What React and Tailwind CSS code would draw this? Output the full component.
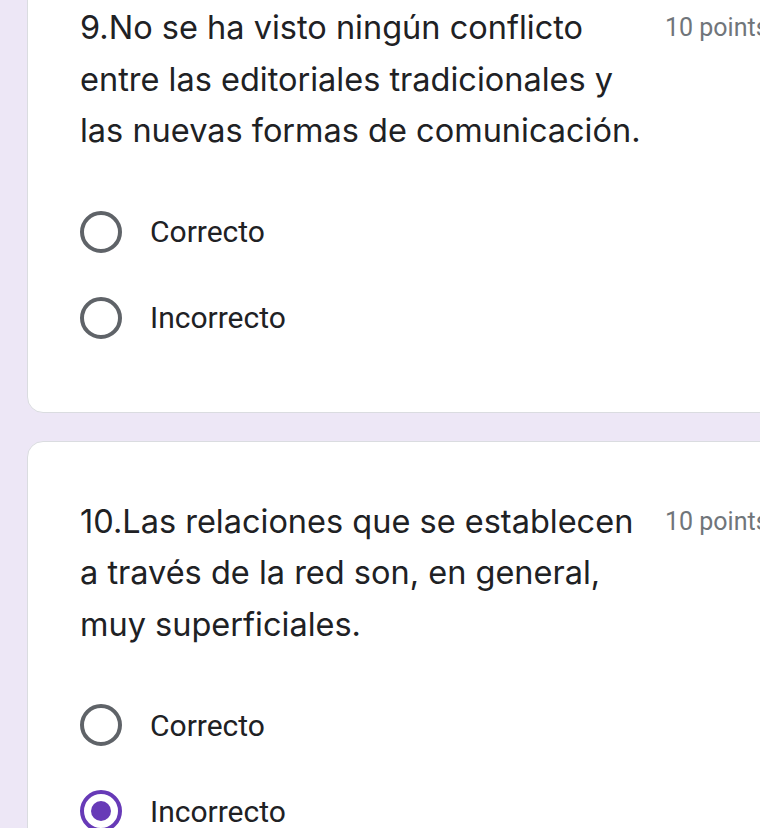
import React from "react";

function Radio({ checked }) {
  return checked ? (
    <div className="w-[42px] h-[42px] rounded-full border-[4px] border-[#673ab7] flex items-center justify-center shrink-0">
      <div className="w-[20px] h-[20px] rounded-full bg-[#673ab7]" />
    </div>
  ) : (
    <div className="w-[42px] h-[42px] rounded-full border-[4px] border-[#5f6368] shrink-0" />
  );
}

function Option({ label, checked }) {
  return (
    <div className="flex items-center h-[86px] gap-[28px]">
      <Radio checked={checked} />
      <span className="text-[30px] text-[#202124]" style={{ fontFamily: "Roboto, sans-serif" }}>
        {label}
      </span>
    </div>
  );
}

function Card({ lines, options, className }) {
  return (
    <div className={"ml-[27px] w-[820px] bg-white border border-[#dadce0] rounded-[16px] pl-[52px] pt-[54px] pb-[51px] " + className}>
      <div className="flex items-start">
        <div
          className="w-[585px] text-[32.5px] leading-[51.5px] text-[#202124]"
          style={{ fontFamily: "Inter, sans-serif" }}
        >
          {lines.map((l, i) => (
            <div key={i} className="whitespace-nowrap">{l}</div>
          ))}
        </div>
        <div
          className="pt-[8px] text-[25px] leading-[36px] text-[#70757a] whitespace-nowrap"
          style={{ fontFamily: "Roboto, sans-serif" }}
        >
          10 points
        </div>
      </div>
      <div className="mt-[32px]">
        {options.map((o, i) => (
          <Option key={i} label={o.label} checked={o.checked} />
        ))}
      </div>
    </div>
  );
}

export default function App() {
  return (
    <div className="w-[760px] h-[828px] overflow-hidden bg-[#ede7f6]">
      <div className="mt-[-53px]">
        <Card
          lines={[
            "9.No se ha visto ningún conflicto",
            "entre las editoriales tradicionales y",
            "las nuevas formas de comunicación.",
          ]}
          options={[{ label: "Correcto" }, { label: "Incorrecto" }]}
        />
        <Card
          className="mt-[28px]"
          lines={[
            "10.Las relaciones que se establecen",
            "a través de la red son, en general,",
            "muy superficiales.",
          ]}
          options={[{ label: "Correcto" }, { label: "Incorrecto", checked: true }]}
        />
      </div>
    </div>
  );
}
